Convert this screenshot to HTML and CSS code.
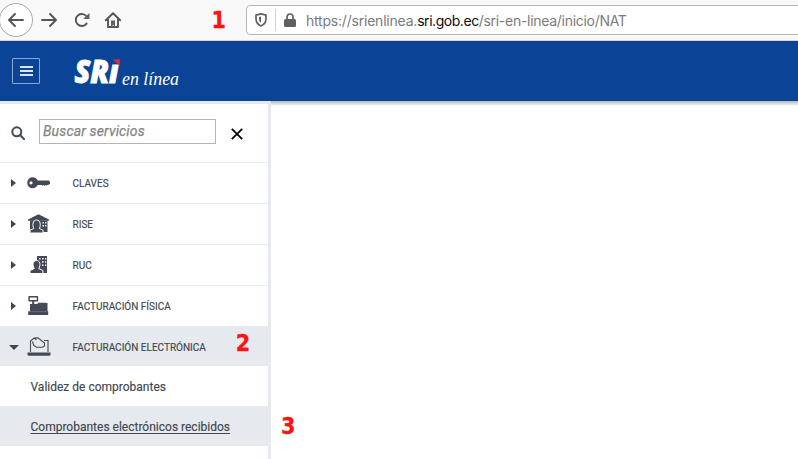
FILE: index.html
```html
<!DOCTYPE html>
<html lang="es">
<head>
<meta charset="utf-8">
<title>SRI en línea</title>
<link rel="stylesheet" href="styles.css">
</head>
<body>
<div class="toolbar">
  <div class="nav">
    <span class="back"><svg width="16" height="14" viewBox="0 0 16 14"><path d="M15 7H1.500M7 1L1 7l6 6"/></svg></span>
    <svg class="forward" width="16" height="14" viewBox="0 0 16 14"><path d="M1 7h13.500M9 1l6 6-6 6"/></svg>
    <svg class="reload" width="16" height="16" viewBox="0 0 16 16"><path d="M12.600 11.600A6 6 0 1 1 13 5"/><path class="solid" d="M15.500 1v6H9.200z"/></svg>
    <svg class="home" width="16" height="16" viewBox="0 0 16 16"><path d="M.8 8.300L8 1.200l7.200 7.100M3 7v8h10V7"/><path class="solid" d="M6 15V8.500h4V15H8.800v-2H7.700v2z"/></svg>
  </div>
  <span class="mark mark-1">1</span>
  <div class="address">
    <svg class="shield" width="12" height="14" viewBox="0 0 12 14"><path d="M6 .9l5 1.200v3.700c0 3.200-1.900 5.900-5 7.200C2.900 11.700 1 9 1 5.800V2.100z"/><path class="solid" d="M6 3.500v6.400C4.600 8.800 4 7.600 4 5.800V4z"/></svg>
    <i class="split"></i>
    <svg class="lock" width="12" height="14" viewBox="0 0 12 14"><path d="M3 7V4a3 3 0 0 1 6 0v3"/><rect class="solid" y="6" width="12" height="8" rx="1.500"/></svg>
    <span class="url">https://srienlinea.<b>sri.gob.ec</b><span class="path">/sri-en-linea/inicio/NAT</span></span>
  </div>
</div>
<header class="header">
  <div class="menu"><i></i><i></i><i></i></div>
  <svg class="logo" width="112" height="52" viewBox="0 -8 112 52">
    <text class="logo-main" x="1.500" y="30" textLength="44" lengthAdjust="spacingAndGlyphs">SRı</text>
    <path class="logo-flag" d="M40 6.300h6.800v7z"/>
    <text class="logo-sub" x="49" y="31.500" textLength="57" lengthAdjust="spacingAndGlyphs">en línea</text>
  </svg>
</header>
<div class="main">
  <aside class="sidebar">
    <div class="search">
      <svg class="lens" width="14" height="14" viewBox="0 0 14 14"><circle cx="5.800" cy="5.800" r="4.500"/><path d="M9 9l4 4"/></svg>
      <input type="text" placeholder="Buscar servicios">
      <svg class="close" width="12" height="12" viewBox="0 0 12 12"><path d="M.8.8l10.400 10.400M11.200.8L.8 11.200"/></svg>
    </div>
    <div class="item"><i class="arrow"></i>
      <svg class="icon" width="24" height="22" viewBox="0 0 24 22"><path fill-rule="evenodd" d="M5.500 5.200c2.600 0 4.300 1.300 5.200 3.400h11.100l1.200 1.200v2l-1.200 1-1.400.2-.8.800-1-.8-1 .8-1-.8-1 .8-1-.8h-3.900c-.9 2-2.700 3.200-5.200 3.200C2.500 16.200.3 13.700.3 10.700s2.200-5.500 5.200-5.500zM4 9.200a1.600 1.600 0 1 0 0 3.200 1.600 1.600 0 0 0 0-3.200z"/></svg>
      <span>CLAVES</span></div>
    <div class="item"><i class="arrow"></i>
      <svg class="icon" width="24" height="22" viewBox="0 0 24 22"><path d="M11.500 1.200L22 6.500v1.300H1V6.500z"/><path d="M3 7.500h17.500V19H3z"/><path class="cut" d="M15.500 9H17v1.500h-1.500zm0 3H17v1.500h-1.500zM18.200 9h1.200v1.500h-1.200zm0 3h1.200v1.500h-1.200z"/><path class="outline" d="M3 19.500v-2.300l3.800-1.700C5.100 12.300 5.700 7 9.600 7s4.500 5.300 2.700 8.500l3.700 1.700v2.300"/></svg>
      <span>RISE</span></div>
    <div class="item"><i class="arrow"></i>
      <svg class="icon" width="24" height="22" viewBox="0 0 24 22"><path d="M10 2h10v17H10z"/><path class="cut" d="M12 4h1.500v1.500H12zm3 0h1.500v1.500H15zm3 0h1.200v1.500H18zM15 7.200h1.500v1.500H15zm3 0h1.200v1.500H18zM15 10.500h1.500V12H15zm3 0h1.200V12H18z"/><path class="outline" d="M3 19.500v-3l4.300-2C5.100 11 5.800 6.500 9.500 6.500s4.400 4.500 2.200 8l4.200 2v3z"/></svg>
      <span>RUC</span></div>
    <div class="item"><i class="arrow"></i>
      <svg class="icon" width="24" height="22" viewBox="0 0 24 22"><path fill-rule="evenodd" d="M2 1h8.500l.7.700v4l-.7.700H7.200V9h3.500V7.800h8V8h1.800v8.200h.7V20H1.200v-3.800H3V9h2.200V6.400H2l-.7-.7v-4zm.8 1.500v2.400h6.900V2.500z"/><path class="register-line" d="M2.500 16.600h17.500"/></svg>
      <span>FACTURACIÓN FÍSICA</span></div>
    <div class="item open"><i class="arrow"></i>
      <svg class="icon" width="24" height="22" viewBox="0 0 24 22"><path d="M.5 16.500h23v2.300l-1 .9h-21l-1-.9z"/><path class="line" d="M3.500 16V5L7 2l4-.3L17.500 7v3l-2 1.300H9.500L6.800 9.500 5.500 5.500M17 4.500h4V16M7 2l2.500 1.800"/></svg>
      <span>FACTURACIÓN ELECTRÓNICA</span><span class="mark mark-2">2</span></div>
    <a class="sub">Validez de comprobantes</a>
    <a class="sub selected">Comprobantes electrónicos recibidos</a>
  </aside>
  <main class="content"><span class="mark mark-3">3</span></main>
</div>
</body>
</html>
```
FILE: styles.css
```css
* { box-sizing: border-box; }
body { margin: 0; width: 798px; height: 459px; overflow: hidden; background: #fff; color: #40474f; font-family: Roboto, sans-serif; display: flex; flex-direction: column; }
svg { display: block; flex: none; }

.toolbar { height: 41px; flex: none; display: flex; background: #f9f9fa; border-bottom: 1px solid #d4d4d2; }
.nav { width: 212px; flex: none; display: flex; align-items: center; }
.nav svg, .shield, .lock { fill: none; stroke: #4b4b4d; stroke-width: 2; stroke-linecap: round; stroke-linejoin: round; }
.nav svg { stroke: #555557; stroke-width: 1.900; }
.shield, .lock { stroke: #606062; stroke-width: 1.700; }
.nav .solid, .shield .solid, .lock .solid { fill: #606062; stroke: none; }
.back { width: 34px; height: 34px; margin-left: -1px; border: 1px solid #aaa; border-radius: 50%; background: #fff; display: flex; align-items: center; justify-content: center; }
.forward { margin-left: 8px; }
.reload { margin-left: 17px; }
.home { margin-left: 15px; }
.mark { color: #fb1410; font: bold 23px/26px "DejaVu Sans Condensed", "DejaVu Sans", sans-serif; -webkit-text-stroke: .3px #fb1410; }
.mark-1 { width: 33.500px; margin-top: 7px; margin-left: -.5px; flex: none; }
.address { flex: 1; height: 30px; margin: 5px -6px 0 1px; padding-left: 8px; border: 1px solid #b5b5b5; border-radius: 4px; background: #fff; display: flex; align-items: center; }
.split { width: 1px; height: 22px; margin: 0 8px; background: #d3d3d3; }
.url { margin: 2px 0 0 10px; color: #7b7b7b; font: 14px/20px Inter, sans-serif; white-space: nowrap; letter-spacing: -.21px; }
.url b { font-weight: 400; color: #0c0c0d; letter-spacing: -.45px; }
.path { letter-spacing: -.29px; }

.header { height: 60px; flex: none; display: flex; background: #0b4497; position: relative; z-index: 1; }
.menu { width: 28px; height: 26px; margin: 17px 0 0 12px; border: 1px solid #8aa7d4; border-radius: 1px; display: flex; flex-direction: column; align-items: center; justify-content: center; gap: 2px; }
.menu i { width: 13px; height: 2px; background: #dbe4f2; }
.logo { margin: 4px 0 0 33px; }
.logo text { fill: #fff; }
.logo-main { font: italic 800 32px "Open Sans", sans-serif; stroke: #fff; stroke-width: .9; }
.logo-sub { font: italic 18px "Liberation Serif", serif; }
.logo-flag { fill: #e52a2b; }

.main { flex: 1; display: flex; }
.sidebar { width: 271px; height: 358px; flex: none; border-top: 3px solid #e6e9ee; border-right: 3px solid #e6e9ee; }
.search { height: 59px; display: flex; align-items: flex-start; border-bottom: 1px solid #e6e9ee; }
.lens { margin: 22px 0 0 11px; fill: none; stroke: #434b57; stroke-width: 2; stroke-linecap: round; }
.search input { width: 177px; height: 25px; margin: 15px 0 0 14px; padding: 0 3px 1px; border: 1px solid #b4b4b4; border-radius: 0; font: italic 14px/20px Roboto, sans-serif; }
.search input::placeholder { color: #858585; opacity: 1; -webkit-text-stroke: .25px #858585; letter-spacing: .15px; }
.close { margin: 23.500px 0 0 15px; fill: none; stroke: #000; stroke-width: 1.800; }

.item { height: 41px; display: flex; align-items: center; border-bottom: 1px solid #e6e9ee; font-size: 10px; font-weight: 400; white-space: nowrap; -webkit-text-stroke: .15px #40474f; }
.arrow { width: 0; height: 0; margin-left: 11px; border: solid transparent; border-width: 4.500px 0 4.500px 5px; border-left-color: #40474f; }
.icon { width: 24px; margin: 0 21.500px 0 11px; fill: #434a55; }
.icon .cut { fill: #fff; }
.icon .outline { fill: #434a55; stroke: #fff; stroke-width: 1; }
.icon .line { fill: none; stroke: #434a55; stroke-width: 1.100; }
.icon .register-line { stroke: #777d86; stroke-width: .7; }
.item.open { height: 40px; margin-top: -1px; background: #e6e9ee; padding-top: 3px; }
.open .arrow { margin-left: 9px; border-width: 5px 5px 0; border-color: #40474f transparent transparent; }
.open .icon { margin: 0 21.500px 0 8px; }
.mark-2 { margin: -8px 0 0 30px; }
.sub { height: 40px; padding: 2px 0 0 30.500px; display: flex; align-items: center; font-size: 12px; white-space: nowrap; -webkit-text-stroke: .15px #40474f; }
.selected { background: #e6e9ee; text-decoration: underline; text-underline-offset: 2px; }
.content { flex: 1; padding: 312px 0 0 10px; background: linear-gradient(#b5b5b5, #fff 5px); }
```
